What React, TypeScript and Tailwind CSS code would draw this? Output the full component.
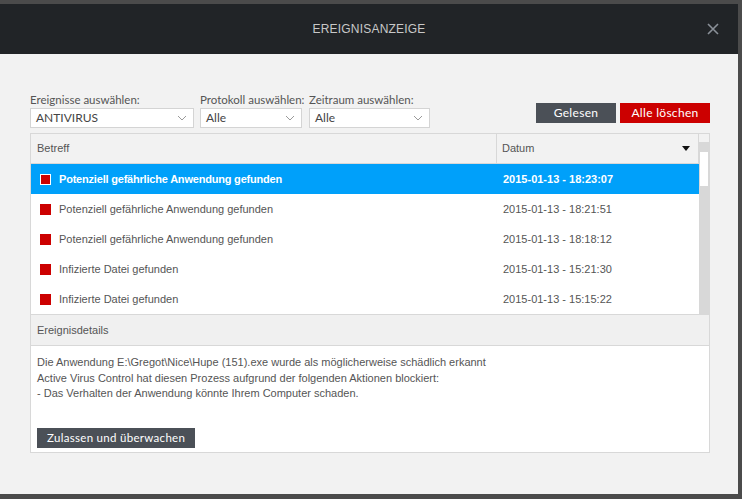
import { useState } from "react";

const events = [
    { title: "Potenziell gefährliche Anwendung gefunden", date: "2015-01-13 - 18:23:07" },
    { title: "Potenziell gefährliche Anwendung gefunden", date: "2015-01-13 - 18:21:51" },
    { title: "Potenziell gefährliche Anwendung gefunden", date: "2015-01-13 - 18:18:12" },
    { title: "Infizierte Datei gefunden", date: "2015-01-13 - 15:21:30" },
    { title: "Infizierte Datei gefunden", date: "2015-01-13 - 15:15:22" },
];

const uiFont = { fontFamily: "Lato, 'Open Sans', sans-serif" };
const arial = { fontFamily: "'Liberation Sans', Arial, sans-serif" };

function Chevron() {
    return (
        <svg width="10" height="6" viewBox="0 0 10 6" className="shrink-0">
            <path d="M1 1l4 4 4-4" fill="none" stroke="#9a9a9a" strokeWidth="1" />
        </svg>
    );
}

function SelectBox({ label, value, width }: { label: string; value: string; width: string }) {
    return (
        <div className={`flex flex-col ${width}`}>
            <span className="text-[11.5px] leading-[14px] text-[#555] mb-[1px] whitespace-nowrap" style={uiFont}>{label}</span>
            <div className="h-[20px] bg-white border border-[#d4d4d4] flex items-center justify-between pl-[5px] pr-[6px]">
                <span className="text-[12px] text-[#444]" style={uiFont}>{value}</span>
                <Chevron />
            </div>
        </div>
    );
}

export default function App() {
    const [selected, setSelected] = useState(0);

    return (
        <div className="w-[742px] h-[499px] bg-[#4b4b4b] pt-[4px] pr-[4px] pb-[5px] flex">
            <div className="flex-1 flex flex-col">
                {/* Title bar */}
                <div className="h-[50px] bg-[#212427] relative flex items-center justify-center">
                    <span className="text-[12px] text-[#c8c8c8] tracking-[0.2px]" style={arial}>EREIGNISANZEIGE</span>
                    <button className="absolute right-[18px] top-[18px] w-[14px] h-[14px] flex items-center justify-center">
                        <svg width="12" height="12" viewBox="0 0 12 12">
                            <path d="M1 1l10 10M11 1L1 11" stroke="#8a9098" strokeWidth="1.6" />
                        </svg>
                    </button>
                </div>

                {/* Body */}
                <div className="flex-1 bg-[#f2f2f2] pl-[30px] pr-[28px] pt-[39px]">
                    <div className="flex items-end justify-between">
                        <div className="flex items-end">
                            <SelectBox label="Ereignisse auswählen:" value="ANTIVIRUS" width="w-[164px]" />
                            <div className="w-[6px]" />
                            <SelectBox label="Protokoll auswählen:" value="Alle" width="w-[102px]" />
                            <div className="w-[7px]" />
                            <SelectBox label="Zeitraum auswählen:" value="Alle" width="w-[121px]" />
                        </div>
                        <div className="flex gap-[4px] mb-[5px]">
                            <button className="w-[80px] h-[20px] bg-[#4b5057] text-white text-[12px] tracking-[0.3px]" style={uiFont}>Gelesen</button>
                            <button className="w-[90px] h-[20px] bg-[#cc0000] text-white text-[12px] tracking-[0.3px]" style={uiFont}>Alle löschen</button>
                        </div>
                    </div>

                    {/* Event table */}
                    <div className="mt-[5px] border border-[#d8d8d8] bg-white flex flex-col h-[320px]">
                        <div className="flex h-[180px]">
                            <div className="flex-1 flex flex-col">
                                <div className="h-[30px] bg-[#f2f2f2] border-b border-r border-[#d8d8d8] flex text-[11px] text-[#555]" style={arial}>
                                    <div className="w-[466px] border-r border-[#d8d8d8] flex items-center pl-[6px]">Betreff</div>
                                    <div className="flex-1 flex items-center justify-between pl-[5px] pr-[8px]">
                                        <span>Datum</span>
                                        <svg width="8" height="5" viewBox="0 0 8 5">
                                            <path d="M0 0h8L4 5z" fill="#111" />
                                        </svg>
                                    </div>
                                </div>
                                {events.map((e, i) => {
                                    const active = i === selected;
                                    return (
                                        <div
                                            key={i}
                                            onClick={() => setSelected(i)}
                                            className={`h-[30px] flex items-center text-[11px] cursor-default ${active ? "bg-[#00a0fa] text-white font-bold tracking-[-0.2px]" : "bg-white text-[#555]"}`}
                                            style={arial}
                                        >
                                            <div className="w-[466px] flex items-center pl-[9px]">
                                                <span className={`w-[11px] h-[11px] bg-[#cc0000] border ${active ? "border-white" : "border-[#cc0000]"}`} />
                                                <span className="ml-[8px]">{e.title}</span>
                                            </div>
                                            <div className="pl-[6px] tracking-normal">{e.date}</div>
                                        </div>
                                    );
                                })}
                            </div>
                            {/* Scrollbar */}
                            <div className="w-[10px] flex flex-col">
                                <div className="h-[8px] bg-[#f2f2f2]" />
                                <div className="flex-1 bg-[#d8d8d8] pt-[10px] px-[1px]">
                                    <div className="h-[34px] bg-white" />
                                </div>
                            </div>
                        </div>

                        {/* Details */}
                        <div className="h-[32px] bg-[#f0f0f0] border-y border-[#d8d8d8] flex items-center pl-[6px] text-[11px] text-[#555]" style={arial}>
                            Ereignisdetails
                        </div>
                        <div className="flex-1 flex flex-col justify-between pl-[6px] pt-[9px] pb-[4px]">
                            <div className="text-[11px] leading-[15.5px] text-[#555]" style={arial}>
                                <p>Die Anwendung E:\Gregot\Nice\Hupe (151).exe wurde als möglicherweise schädlich erkannt</p>
                                <p>Active Virus Control hat diesen Prozess aufgrund der folgenden Aktionen blockiert:</p>
                                <p>- Das Verhalten der Anwendung könnte Ihrem Computer schaden.</p>
                            </div>
                            <button className="self-start h-[20px] px-[10px] bg-[#4b5057] text-white text-[11.5px] tracking-[0.3px]" style={uiFont}>
                                Zulassen und überwachen
                            </button>
                        </div>
                    </div>
                </div>
            </div>
        </div>
    );
}
